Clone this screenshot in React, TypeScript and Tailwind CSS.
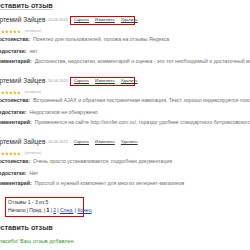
import React from "react";

type Review = {
  name: string;
  date: string;
  rating: string;
  plus: string;
  minus: string;
  comment: string;
  boxed: boolean;
};

const REVIEWS: Review[] = [
  {
    name: "Артемий Зайцев",
    date: "20.06.2015",
    rating: "(отлично)",
    plus: "Понятно для пользователей, похожа на отзывы Яндекса",
    minus: "нет",
    comment:
      "Достоинства, недостатки, комментарий и оценка - это тот необходимый и достаточный минимум для сайта",
    boxed: true,
  },
  {
    name: "Артемий Зайцев",
    date: "20.06.2015",
    rating: "(отлично)",
    plus: "Встроенный AJAX и обратная постраничная навигация. Текст хорошо индексируется поисковиками.",
    minus: "Недостатков не обнаружено",
    comment: "Применяется на сайте http://simfer.com.ru/, гораздо удобнее стандартного битриксовского.",
    boxed: true,
  },
  {
    name: "Артемий Зайцев",
    date: "20.06.2015",
    rating: "(отлично)",
    plus: "Очень просто устанавливается, подробная документация",
    minus: "Нет",
    comment: "Простой и нужный компонент для многих интернет-магазинов",
    boxed: false,
  },
];

function Stars() {
  return (
    <div className="flex gap-[0.5px]">
      {[0, 1, 2, 3, 4].map((i) => (
        <svg key={i} width="3.5" height="3.5" viewBox="0 0 10 10">
          <path d="M5 0.3 6.4 3.4 9.8 3.7 7.2 6 8 9.5 5 7.7 2 9.5 2.8 6 0.2 3.7 3.6 3.4Z" fill="#f6a80e" />
        </svg>
      ))}
    </div>
  );
}

function Field({ label, value, className }: { label: string; value: string; className?: string }) {
  return (
    <div className={["flex h-[8px] items-center whitespace-nowrap", className].join(" ")}>
      <span className="text-[5.2px] font-bold text-[#333]">{label}</span>
      <span className="ml-[3px] text-[5.2px] text-[#707070]">{value}</span>
    </div>
  );
}

function ReviewItem({ review }: { review: Review }) {
  return (
    <div className="mb-[9px]">
      <div className="flex h-[12px] items-center whitespace-nowrap">
        <span className="w-[48px] text-[6.6px] text-[#333]">{review.name}</span>
        <span className="ml-[5px] text-[4px] text-[#999]">{review.date}</span>
        <div
          className={[
            "ml-[2px] flex h-[9px] w-[65px] items-center gap-[6px] pl-[3px] text-[4.4px] text-[#333] underline",
            review.boxed ? "border border-[#e00000]" : "border border-transparent",
          ].join(" ")}
        >
          <span>Скрыть</span>
          <span>Изменить</span>
          <span>Удалить</span>
        </div>
      </div>
      <div className="mt-[2px] flex h-[8px] items-center pl-[6px]">
        <Stars />
        <span className="ml-[4px] text-[3.8px] text-[#aaa]">{review.rating}</span>
      </div>
      <Field label="Достоинства:" value={review.plus} />
      <Field label="Недостатки:" value={review.minus} className="mt-[4px]" />
      <Field label="Комментарий:" value={review.comment} className="mt-[2px]" />
    </div>
  );
}

export default function App() {
  return (
    <div
      className="h-[250px] w-[250px] overflow-hidden bg-white"
      style={{ fontFamily: '"Liberation Sans", Arial, sans-serif' }}
    >
      <div className="-ml-[5px]">
        <div className="flex h-[12px] items-center">
          <span className="border-b border-[#ccc] text-[7.2px] font-bold leading-[7.5px] text-[#333]">
            Оставить отзыв
          </span>
        </div>
        <div className="mt-[2px]">
          {REVIEWS.map((r, i) => (
            <ReviewItem key={i} review={r} />
          ))}
        </div>
        <div className="ml-[10px] w-[79px] border border-[#e00000] py-[1px] pl-[2px] text-[5px] text-[#333]">
          <div className="flex h-[8px] items-center">Отзывы 1 - 3 из 5</div>
          <div className="flex h-[8px] items-center gap-[1.3px] whitespace-nowrap">
            <span>Начало</span>
            <span>|</span>
            <span>Пред.</span>
            <span>|</span>
            <span className="font-bold text-black">1</span>
            <span>|</span>
            <span className="text-[#1a3dc1] underline">2</span>
            <span>|</span>
            <span className="text-[#1a3dc1] underline">След.</span>
            <span>|</span>
            <span className="text-[#1a3dc1] underline">Конец</span>
          </div>
        </div>
        <div className="mt-[5px] flex h-[12px] items-center">
          <span className="text-[7.2px] font-bold text-[#333]">Оставить отзыв</span>
        </div>
        <div className="mt-[3px] flex h-[8px] items-center">
          <span className="text-[5.5px] text-[#3a9a2a]">Спасибо! Ваш отзыв добавлен</span>
        </div>
      </div>
    </div>
  );
}
